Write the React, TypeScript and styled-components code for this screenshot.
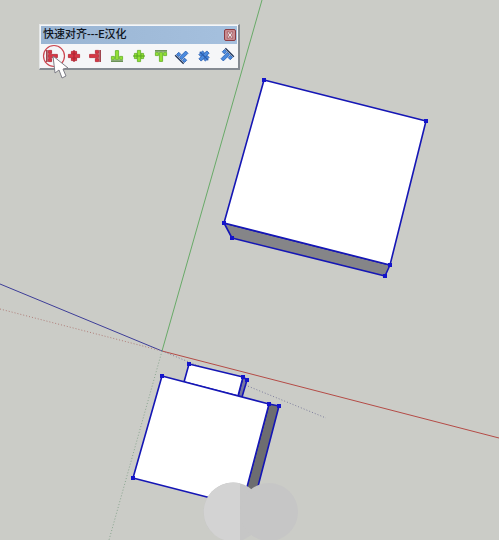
import React from "react";
import styled, { createGlobalStyle } from "styled-components";

const GlobalStyle = createGlobalStyle`
  * { box-sizing: border-box; }
  body { margin: 0; background: #cbccc7; }
`;

const Viewport = styled.main`
  position: relative;
  min-height: 100vh;
  overflow: hidden;
  background: #cbccc7;
  font-family: "Liberation Sans", "Noto Sans CJK SC", sans-serif;
`;

const Scene = styled.svg`
  position: absolute;
  inset: 0;
  width: 100%;
  height: 100%;
`;

const Palette = styled.section`
  position: absolute;
  left: 39px;
  top: 24px;
  display: flex;
  flex-direction: column;
  padding: 1px;
  border: 1px solid #e6e8e8;
  border-right: 2px solid #858b92;
  border-bottom: 2px solid #858b92;
  background: #f5f6f8;
`;

const TitleBar = styled.header`
  display: flex;
  align-items: center;
  justify-content: space-between;
  height: 18px;
  padding: 0 1px 0 2px;
  background: linear-gradient(90deg, #9ab5d3, #a5c0de);
`;

const Title = styled.h1`
  margin: 0;
  font-family: Roboto, "Noto Sans CJK SC", sans-serif;
  font-size: 11px;
  line-height: 16px;
  font-weight: 500;
  white-space: nowrap;
  color: #10151e;
`;

const CloseButton = styled.button`
  display: flex;
  width: 12px;
  height: 12px;
  padding: 0;
  border: 1px solid #8b3c43;
  border-radius: 2px;
  background: #c98b90;
`;

const ToolRow = styled.div`
  display: grid;
  grid-template-columns: repeat(9, minmax(21px, 1fr));
  width: 196px;
  height: 23px;
`;

const ToolButton = styled.button`
  display: flex;
  align-items: center;
  justify-content: center;
  padding: 0;
  border: 0;
  background: transparent;
`;

const ToolIcon = styled.svg`
  flex: none;
  width: 14px;
  height: 14px;
`;

const Pointer = styled.svg`
  position: absolute;
  left: 40px;
  top: 44px;
  width: 32px;
  height: 36px;
  pointer-events: none;
`;

type Shape = "edge" | "center";
type Tone = "red" | "green" | "blue";

const tones: Record<Tone, { fill: string; line: string; bar: string }> = {
  red: { fill: "#d83644", line: "#b3222f", bar: "#8a1822" },
  green: { fill: "#93e034", line: "#5fae22", bar: "#4a7a2c" },
  blue: { fill: "#4a8be0", line: "#2a5eb0", bar: "#20345a" },
};

const tools: { label: string; shape: Shape; tone: Tone; turn: number }[] = [
  { label: "左对齐", shape: "edge", tone: "red", turn: 0 },
  { label: "水平居中", shape: "center", tone: "red", turn: 0 },
  { label: "右对齐", shape: "edge", tone: "red", turn: 180 },
  { label: "底对齐", shape: "edge", tone: "green", turn: -90 },
  { label: "垂直居中", shape: "center", tone: "green", turn: 90 },
  { label: "顶对齐", shape: "edge", tone: "green", turn: 90 },
  { label: "前对齐", shape: "edge", tone: "blue", turn: -45 },
  { label: "纵深居中", shape: "center", tone: "blue", turn: -45 },
  { label: "后对齐", shape: "edge", tone: "blue", turn: 135 },
];

function AlignIcon({ shape, tone, turn }: { shape: Shape; tone: Tone; turn: number }) {
  const c = tones[tone];
  return (
    <ToolIcon viewBox="0 0 14 14" aria-hidden="true" overflow="visible">
      <g transform={`rotate(${turn} 7 7)`} strokeWidth="0.8">
        {shape === "edge" ? (
          <>
            <path
              d="M3.4 1.400h3.200v3H3.400zM3.400 5.400h9v3.200h-9zM3.400 9.600h3.200v3H3.400z"
              fill={c.fill}
              stroke={c.line}
            />
            <path d="M1.9 1v12" stroke={c.bar} strokeWidth="1.4" />
          </>
        ) : (
          <>
            <path
              d="M4.400 2.400h5.200v2.600H4.400zM1.400 5.400h11.200v3.200H1.400zM4.400 9h5.200v2.600H4.400z"
              fill={c.fill}
              stroke={c.line}
            />
            <path d="M7 1v12" stroke={c.line} strokeWidth="1.2" />
          </>
        )}
      </g>
    </ToolIcon>
  );
}

const corners: [number, number][] = [
  [264, 80], [426, 121], [224, 223], [390, 265], [232, 238], [385, 276],
  [162, 376], [133, 478], [269, 404], [279, 406], [189, 364], [243, 377], [247, 380],
];

function ModelScene() {
  return (
    <Scene viewBox="0 0 499 540" preserveAspectRatio="xMinYMin slice" role="img" aria-label="模型视图">
      <g fill="none">
        <path d="M262 0L162 351" stroke="#68aa68" />
        <path d="M162 351L499 438" stroke="#b44b46" />
        <path d="M0 284L162 351" stroke="#3d3d98" />
        <path d="M0 309L162 351" stroke="#b07f7a" strokeDasharray="1 2" />
        <path d="M162 351L109 540" stroke="#8aa690" strokeDasharray="1 2" />
        <path d="M162 351L326 418" stroke="#7d7d9c" strokeDasharray="1 2" />
      </g>
      <g stroke="#1516b5" strokeWidth="1.6" strokeLinejoin="round">
        <path d="M224 223L390 265L385 276L232 238Z" fill="#858588" />
        <path d="M264 80L426 121L390 265L224 223Z" fill="#fff" />
        <path d="M243 377L247 380L242 397L238 396Z" fill="#7777a0" />
        <path d="M189 364L243 377L238 396L184 382Z" fill="#fff" />
        <path d="M269 404L279 406L256 494L245 493Z" fill="#6d6d70" />
        <path d="M162 376L269 404L242 506L133 478Z" fill="#fff" />
      </g>
      <g fill="#1414cb">
        {corners.map(([x, y]) => (
          <rect key={`${x}-${y}`} x={x - 2} y={y - 2} width="4" height="4" />
        ))}
      </g>
      <g fill="#c6c6c6">
        <circle cx="233" cy="512" r="29.5" />
        <circle cx="269" cy="512" r="29" />
        <path d="M240 483.300A29.500 29.500 0 1 0 240 540.700Z" fill="#d3d3d3" />
      </g>
    </Scene>
  );
}

export default function App() {
  return (
    <>
      <GlobalStyle />
      <Viewport>
        <ModelScene />
        <Palette aria-label="快速对齐">
          <TitleBar>
            <Title>快速对齐---E汉化</Title>
            <CloseButton aria-label="关闭">
              <svg viewBox="0 0 10 10" width="10" height="10" aria-hidden="true">
                <path d="M2 2h2l1 2 1-2h2L6 5l2 3H6L5 6 4 8H2l2-3z" fill="#fff" stroke="#782a34" strokeWidth="0.5" />
              </svg>
            </CloseButton>
          </TitleBar>
          <ToolRow role="toolbar" aria-label="对齐工具">
            {tools.map((tool) => (
              <ToolButton key={tool.label} aria-label={tool.label}>
                <AlignIcon shape={tool.shape} tone={tool.tone} turn={tool.turn} />
              </ToolButton>
            ))}
          </ToolRow>
        </Palette>
        <Pointer viewBox="0 0 32 36" aria-hidden="true">
          <circle cx="14" cy="12" r="10.5" fill="none" stroke="#cb4650" strokeWidth="1.2" />
          <path
            d="M13 12L15 29L19 26L22 34L26 32L23 25L28 24Z"
            fill="#fff"
            stroke="#7d7d86"
            strokeLinejoin="round"
          />
        </Pointer>
      </Viewport>
    </>
  );
}
